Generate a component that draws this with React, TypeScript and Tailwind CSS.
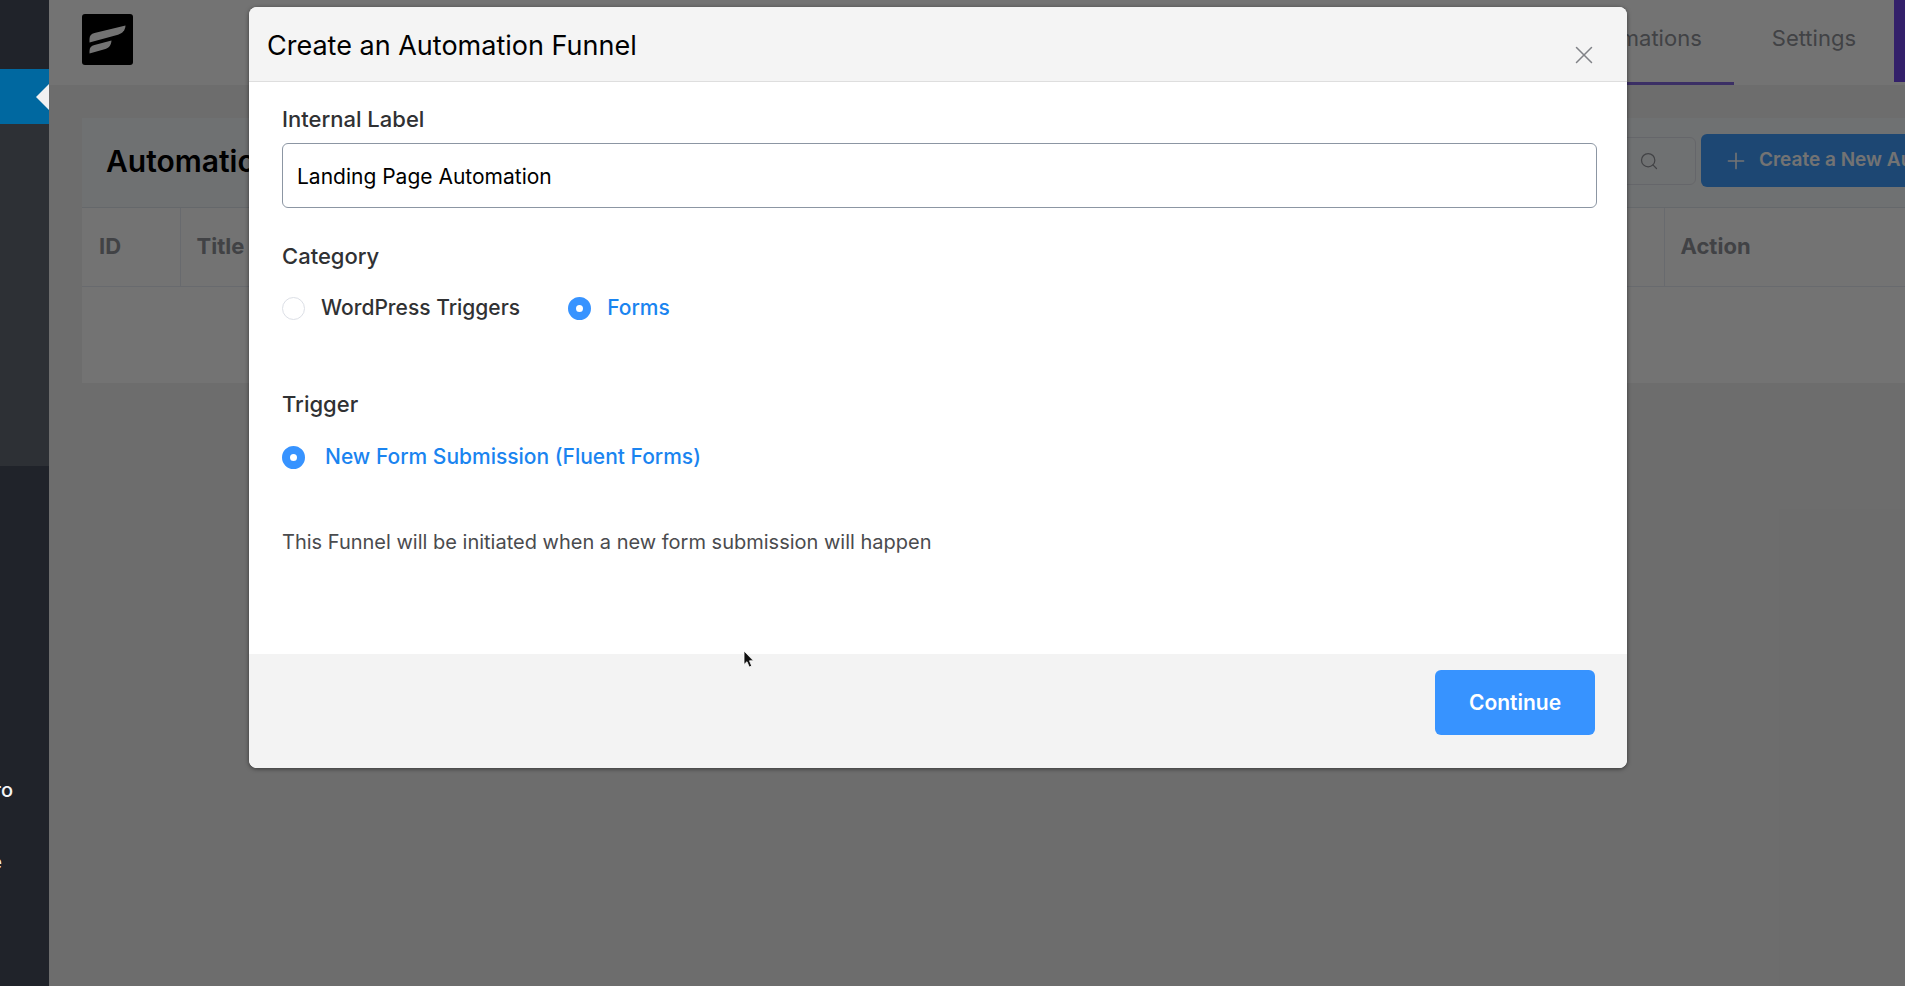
import { useState } from "react";
import { LuPlus, LuSearch, LuX } from "react-icons/lu";

function Logo() {
  return (
    <svg viewBox="0 0 51 51" className="w-[51px] h-[51px]" aria-label="Logo">
      <rect width="51" height="51" rx="3" fill="#000" />
      <path
        d="M7.500 28.500V25c0-3.500 1.800-5.200 5-6L43.500 11.500c-.4 4.800-2.800 7.800-7.500 9.200z"
        fill="#fff"
      />
      <path
        d="M7.500 39.500V37c0-3.500 1.800-5.200 5-6L29.500 26.500c-.4 4.800-2.400 7.500-7 8.800z"
        fill="#fff"
      />
    </svg>
  );
}

function Sidebar() {
  return (
    <aside className="relative z-20 flex flex-col w-[49px] shrink-0 bg-[#20232a] text-xl font-medium text-gray-100">
      <div className="h-[69px]" />
      <div className="relative h-[55px] bg-[#0068a0]">
        <span className="absolute right-0 top-[15px] border-y-[13px] border-y-transparent border-r-[13px] border-r-[#f1f1f1]" />
      </div>
      <div className="h-[342px] bg-[#2d3035]" />
      <ul className="flex flex-col gap-10 pt-[308px]">
        <li className="flex justify-end w-[13px] h-8 leading-8 overflow-hidden">
          Pro
        </li>
        <li className="flex justify-end w-0.5 h-8 leading-8 overflow-hidden">
          e
        </li>
      </ul>
    </aside>
  );
}

function TopBar() {
  return (
    <header className="flex justify-between h-[85px] bg-white pl-[33px]">
      <div className="pt-3.5">
        <Logo />
      </div>
      <nav className="flex text-[22px] leading-8 text-[#909399]">
        <a href="#" className="px-8 pt-[22px] border-b-3 border-[#8468e0]">
          Automations
        </a>
        <a href="#" className="px-[38px] pt-[22px]">
          Settings
        </a>
        <span className="w-[11px] h-[82px] bg-[#7147eb]" />
      </nav>
    </header>
  );
}

function AutomationsCard() {
  return (
    <section className="mt-[33px] ml-[33px] -mr-20 bg-white">
      <div className="flex items-center justify-between h-[90px] px-6 pb-1 bg-[#f7fafc] border-b border-[#dfe6ee]">
        <h1 className="text-3xl font-semibold text-black">Automations</h1>
        <div className="flex items-center gap-[5px]">
          <div className="flex items-center h-12 w-80 border border-[#e0e3ea] rounded-md pr-9">
            <input
              type="text"
              aria-label="Search"
              className="w-full h-full px-4 outline-none"
            />
            <LuSearch
              strokeWidth={1.5}
              className="w-5 h-5 shrink-0 text-[#909399]"
            />
          </div>
          <button className="flex items-center gap-2.5 h-[53px] w-[260px] pl-[22px] rounded-md bg-[#409eff] text-white text-[19px] font-semibold whitespace-nowrap overflow-hidden">
            <LuPlus strokeWidth={1.5} className="w-[26px] h-[26px] shrink-0" />
            Create a New Automation
          </button>
        </div>
      </div>
      <table className="w-full table-fixed text-left text-[22px] text-[#909399]">
        <thead>
          <tr className="h-[78px] border-b border-[#e6eaf3]">
            <th className="w-[98px] pl-[17px] font-bold border-r border-[#e6eaf3]">
              ID
            </th>
            <th className="pl-4 font-bold border-r border-[#e6eaf3]">Title</th>
            <th className="w-[321px] pl-4 font-bold">Action</th>
          </tr>
        </thead>
        <tbody>
          <tr className="h-[97px]">
            <td colSpan={3} />
          </tr>
        </tbody>
      </table>
    </section>
  );
}

interface RadioProps {
  name: string;
  label: string;
  checked: boolean;
  onChange: () => void;
  gap?: string;
}

function Radio({ name, label, checked, onChange, gap = "gap-4" }: RadioProps) {
  return (
    <label
      className={`flex items-center text-[21px] leading-8 font-[450] ${gap} ${
        checked ? "text-[#1a84f0]" : "text-[#303133]"
      }`}
    >
      <input
        type="radio"
        name={name}
        checked={checked}
        onChange={onChange}
        className="appearance-none w-[23px] h-[23px] rounded-full bg-white border border-[#dcdfe6] checked:border-8 checked:border-[#3793ff]"
      />
      {label}
    </label>
  );
}

function FunnelModal() {
  const [label, setLabel] = useState<string>("Landing Page Automation");
  const [category, setCategory] = useState<string>("forms");
  const [trigger, setTrigger] = useState<string>("fluent");

  return (
    <div
      role="dialog"
      aria-label="Create an Automation Funnel"
      className="relative mt-[7px] ml-[200px] mr-[278px] rounded-lg bg-white shadow-[0_1px_4px_rgba(0,0,0,0.5)] overflow-hidden"
    >
      <div className="flex justify-between h-[75px] pl-[18px] pr-7 bg-[#f4f4f4] border-b border-[#dedede]">
        <h2 className="pt-[19px] text-[27px] leading-10 text-black">
          Create an Automation Funnel
        </h2>
        <button aria-label="Close" className="pt-[21px]">
          <LuX strokeWidth={1.2} className="w-[30px] h-[30px] text-[#808287]" />
        </button>
      </div>
      <form
        onSubmit={(e) => {
          e.preventDefault();
        }}
      >
        <div className="pt-[21px] pb-24 pl-[33px] pr-[30px] text-[22px] leading-8 text-[#303133]">
          <label htmlFor="label" className="block font-[450]">
            Internal Label
          </label>
          <input
            id="label"
            type="text"
            value={label}
            onChange={(e) => setLabel(e.target.value)}
            className="block w-full h-[65px] mt-2 px-3.5 pt-0.5 text-[21px] text-black border border-[#8c96a3] rounded-md outline-none"
          />
          <h3 className="mt-8 font-[450]">Category</h3>
          <div className="flex gap-12 mt-5">
            <Radio
              name="category"
              label="WordPress Triggers"
              checked={category === "wordpress"}
              onChange={() => setCategory("wordpress")}
            />
            <Radio
              name="category"
              label="Forms"
              checked={category === "forms"}
              onChange={() => setCategory("forms")}
            />
          </div>
          <h3 className="mt-16 font-[450]">Trigger</h3>
          <div className="flex mt-[21px]">
            <Radio
              name="trigger"
              label="New Form Submission (Fluent Forms)"
              checked={trigger === "fluent"}
              onChange={() => setTrigger("fluent")}
              gap="gap-5"
            />
          </div>
          <p className="mt-[53px] text-xl leading-8 text-[#4a4b4e]">
            This Funnel will be initiated when a new form submission will happen
          </p>
        </div>
        <div className="flex justify-end pt-4 pb-[33px] pr-8 bg-[#f3f3f3]">
          <button
            type="submit"
            className="w-40 h-[65px] rounded-md bg-[#3793ff] text-[21px] font-semibold text-white"
          >
            Continue
          </button>
        </div>
      </form>
      <svg
        viewBox="0 0 12 19"
        className="absolute left-[494px] top-[643px] w-3 h-[19px]"
      >
        <path
          d="M1 1v13.500l3-2.800 2.200 5.300 2.500-1-2.200-5.200h4z"
          fill="#111"
          stroke="#fff"
          strokeWidth="0.8"
        />
      </svg>
    </div>
  );
}

export default function App() {
  return (
    <div className="flex h-screen overflow-hidden bg-[#f1f1f1] font-['Inter',sans-serif]">
      <Sidebar />
      <main className="relative flex-1 min-w-0 overflow-hidden">
        <TopBar />
        <AutomationsCard />
        <div className="absolute inset-0 bg-black/55">
          <FunnelModal />
        </div>
      </main>
    </div>
  );
}
